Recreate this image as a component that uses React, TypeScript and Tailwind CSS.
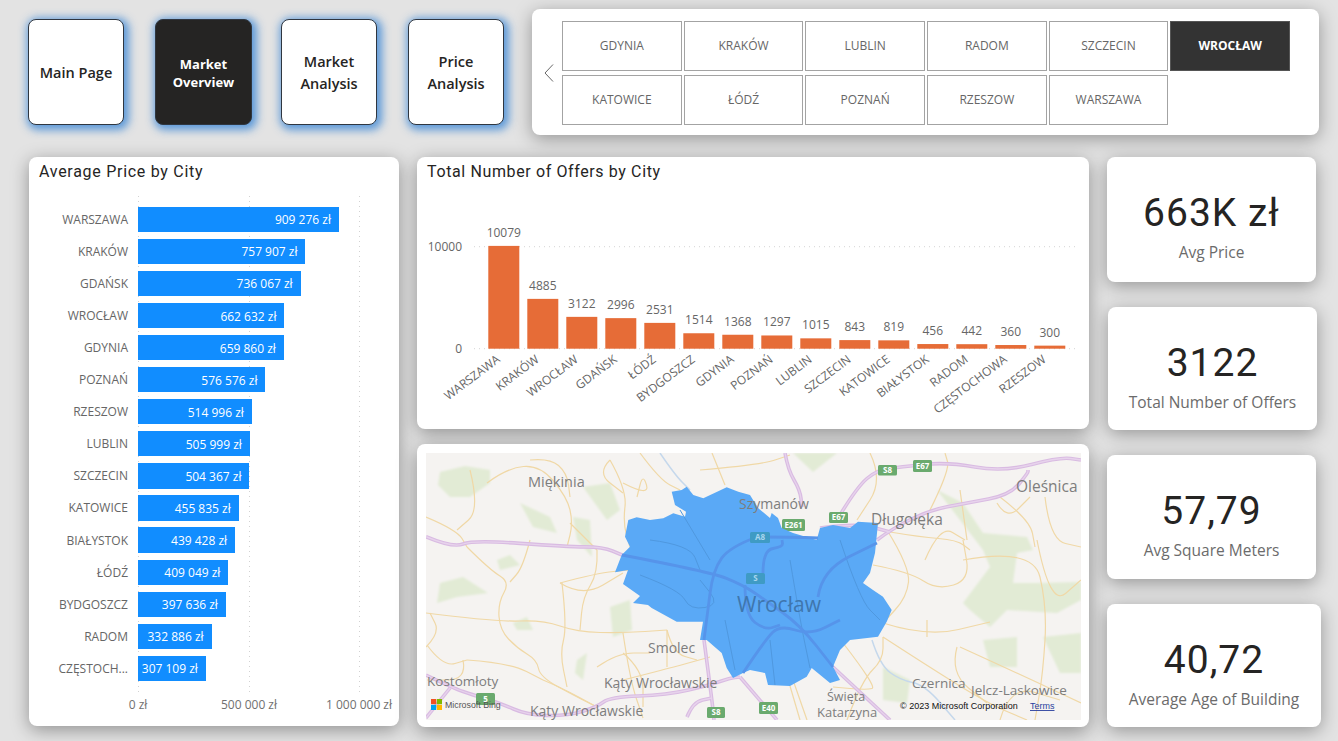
import React from "react";

const NAV = [
  { label: ["Main Page"], active: false, box: "w-[96px]" },
  { label: ["Market", "Overview"], active: true, box: "ml-[31px] w-[97px]" },
  { label: ["Market", "Analysis"], active: false, box: "ml-[29px] w-[96px]" },
  { label: ["Price", "Analysis"], active: false, box: "ml-[31px] w-[96px]" },
];

const SLICER = ["GDYNIA", "KRAKÓW", "LUBLIN", "RADOM", "SZCZECIN", "WROCŁAW", "KATOWICE", "ŁÓDŹ", "POZNAŃ", "RZESZOW", "WARSZAWA"];

const PRICES: [string, number, string][] = [
  ["WARSZAWA", 909276, "909 276 zł"],
  ["KRAKÓW", 757907, "757 907 zł"],
  ["GDAŃSK", 736067, "736 067 zł"],
  ["WROCŁAW", 662632, "662 632 zł"],
  ["GDYNIA", 659860, "659 860 zł"],
  ["POZNAŃ", 576576, "576 576 zł"],
  ["RZESZOW", 514996, "514 996 zł"],
  ["LUBLIN", 505999, "505 999 zł"],
  ["SZCZECIN", 504367, "504 367 zł"],
  ["KATOWICE", 455835, "455 835 zł"],
  ["BIAŁYSTOK", 439428, "439 428 zł"],
  ["ŁÓDŹ", 409049, "409 049 zł"],
  ["BYDGOSZCZ", 397636, "397 636 zł"],
  ["RADOM", 332886, "332 886 zł"],
  ["CZĘSTOCH...", 307109, "307 109 zł"],
];

const OFFERS: [string, number][] = [
  ["WARSZAWA", 10079],
  ["KRAKÓW", 4885],
  ["WROCŁAW", 3122],
  ["GDAŃSK", 2996],
  ["ŁÓDŹ", 2531],
  ["BYDGOSZCZ", 1514],
  ["GDYNIA", 1368],
  ["POZNAŃ", 1297],
  ["LUBLIN", 1015],
  ["SZCZECIN", 843],
  ["KATOWICE", 819],
  ["BIAŁYSTOK", 456],
  ["RADOM", 442],
  ["CZĘSTOCHOWA", 360],
  ["RZESZOW", 300],
];

const KPIS = [
  { value: "663K zł", label: "Avg Price", box: "h-[125px] w-[209px]" },
  { value: "3122", label: "Total Number of Offers", box: "mt-[25px] ml-[1px] h-[123px] w-[209px]" },
  { value: "57,79", label: "Avg Square Meters", box: "mt-[25px] h-[124px] w-[209px]" },
  { value: "40,72", label: "Average Age of Building", box: "mt-[25px] h-[123px] w-[214px]" },
];

const PX_PER_ZL = 221 / 1000000;

function NavButton({ label, active, box }: { label: string[]; active: boolean; box: string }) {
  return (
    <div
      className={`${box} flex h-[106px] shrink-0 flex-col items-center justify-center rounded-[8px] border border-[#2f3640] pt-[2px] text-center shadow-[2px_2px_8px_3px_rgba(58,134,214,0.8)] ${
        active
          ? "bg-[#252423] text-[13px] leading-[18px] font-bold text-white"
          : "bg-white text-[14.5px] leading-[22px] font-semibold text-[#252423]"
      }`}
    >
      {label.map((line) => (
        <span key={line}>{line}</span>
      ))}
    </div>
  );
}

function CitySlicer() {
  return (
    <div className="ml-[28px] flex h-[126px] w-[787px] shrink-0 items-center rounded-[8px] bg-white pt-[2px] pr-[29px] pl-[12px] shadow-[0_4px_18px_rgba(0,0,0,0.34)]">
      <svg width="10" height="18" viewBox="0 0 10 18" className="mr-[8px] shrink-0">
        <path d="M9 0.5 L1 9 L9 17.5" fill="none" stroke="#666" strokeWidth="1" />
      </svg>
      <div className="grid flex-1 grid-cols-6 grid-rows-[50px_50px] gap-x-[2px] gap-y-[4px]">
        {SLICER.map((city) => (
          <div
            key={city}
            className={`flex items-center justify-center border text-[12px] ${
              city === "WROCŁAW"
                ? "border-[#555] bg-[#333333] font-bold text-white"
                : "border-[#a3a3a3] font-medium text-[#666666]"
            }`}
          >
            {city}
          </div>
        ))}
      </div>
    </div>
  );
}

function PriceChart() {
  return (
    <div className="flex h-[569px] w-[370px] shrink-0 flex-col rounded-[8px] bg-white shadow-[0_4px_18px_rgba(0,0,0,0.36)]">
      <h2 className="mt-[6px] ml-[10px] font-['Roboto',sans-serif] text-[16px] leading-[18px] tracking-[0.72px] text-[#252423]">
        Average Price by City
      </h2>
      <div className="relative mt-[15px] flex flex-col gap-[6.9px] pt-[10.7px]">
        {[109, 220, 330].map((x) => (
          <div
            key={x}
            className="absolute top-0 h-[499px] w-px bg-[repeating-linear-gradient(to_bottom,#d2d2d2_0_1px,transparent_1px_5px)]"
            style={{ left: x }}
          />
        ))}
        {PRICES.map(([city, value, text]) => (
          <div key={city} className="relative flex h-[25.2px] items-center">
            <span className="w-[99px] pt-[1px] text-right text-[12px] text-[#666666]">{city}</span>
            <div
              className="ml-[10px] flex h-full items-center justify-end bg-[#118dff] pt-[2px] pr-[8px] text-[12px] font-medium whitespace-nowrap text-white"
              style={{ width: value * PX_PER_ZL }}
            >
              {text}
            </div>
          </div>
        ))}
        <div className="relative h-[16px] text-[12px] leading-[16px] text-[#707070]">
          <span className="absolute top-[9px] left-[109px] -translate-x-1/2 whitespace-nowrap">0 zł</span>
          <span className="absolute top-[9px] left-[220px] -translate-x-1/2 whitespace-nowrap">500 000 zł</span>
          <span className="absolute top-[9px] left-[330px] -translate-x-1/2 whitespace-nowrap">1 000 000 zł</span>
        </div>
      </div>
    </div>
  );
}

function OffersChart() {
  return (
    <div className="flex h-[272px] flex-col rounded-[8px] bg-white shadow-[0_4px_18px_rgba(0,0,0,0.36)]">
      <h2 className="mt-[6px] ml-[10px] h-[22px] font-['Roboto',sans-serif] text-[16px] leading-[18px] tracking-[0.62px] text-[#252423]">
        Total Number of Offers by City
      </h2>
      <svg width="672" height="244" viewBox="417 185 672 244" className="block">
        <line x1="474" y1="246.7" x2="1078" y2="246.7" stroke="#d4d4d4" strokeDasharray="1 4" />
        <line x1="474" y1="348.7" x2="1078" y2="348.7" stroke="#d4d4d4" strokeDasharray="1 4" />
        <text x="462" y="251" textAnchor="end" fontSize="12" fill="#666">10000</text>
        <text x="462" y="353" textAnchor="end" fontSize="12" fill="#666">0</text>
        {OFFERS.map(([city, n], i) => {
          const x = 488.3 + i * 39;
          const h = n * 0.0102;
          const cx = x + 15.5;
          return (
            <g key={city}>
              <rect x={x} y={348.7 - h} width="31" height={h} fill="#e66c37" />
              <text x={cx} y={348.7 - h - 9} textAnchor="middle" fontSize="12" fill="#666">{n}</text>
              <text
                x={cx - 3}
                y={361}
                textAnchor="end"
                fontSize="12"
                fill="#666"
                transform={`rotate(-37 ${cx - 3} 361)`}
              >
                {city}
              </text>
            </g>
          );
        })}
      </svg>
    </div>
  );
}

const GREEN = [
  "440,472 465,466 490,470 490,483 470,497 450,497 438,485",
  "520,503 550,517 557,533 533,527",
  "573,517 590,520 592,557 577,540",
  "497,560 510,555 520,565 500,570",
  "440,583 463,577 488,593 457,597 437,603",
  "513,623 527,617 533,630 517,630",
  "583,487 610,483 620,510 607,520",
  "577,660 587,653 583,680 575,673",
  "610,607 630,600 632,630 613,637",
  "937,490 963,503 983,533 1027,537 1033,550 1017,553 1013,583 1037,583 1081,582 1081,600 1057,613 1007,610 990,627 970,610 963,603 990,567 983,550",
  "983,640 1017,637 1017,667 990,667",
  "1043,637 1081,633 1081,673 1060,673",
  "793,453 837,453 813,472",
  "883,667 910,680 907,703 883,700",
];

const MINOR_ROADS = [
  "487,483 507,468 540,465 567,497 573,523 567,547",
  "467,547 490,570 510,582 498,603 500,630 517,648 537,660 540,677 577,697 597,707",
  "426,613 497,622 543,620 577,632 623,633 667,630",
  "560,583 597,573 630,570",
  "562,583 567,627 560,653 567,687",
  "597,550 598,573 583,597 580,630",
  "610,460 627,490 623,523 630,547",
  "530,460 550,458 567,473 570,497",
  "426,517 457,530 467,547",
  "623,680 663,670 710,657",
  "667,630 667,667",
  "623,633 630,680 643,718",
  "467,660 510,663 543,680",
  "427,645 443,667 467,660",
  "470,470 480,510 457,530",
  "887,530 910,567 907,597 883,623",
  "873,565 910,572 937,590 970,580 963,540",
  "883,623 927,637 990,622",
  "883,637 923,663 987,703 1027,720",
  "963,560 1033,547 1047,607 1043,673 1035,720",
  "1045,497 1050,540 1081,547",
  "960,647 1017,673 1081,703",
  "790,686 800,720",
  "847,720 862,680 883,660 883,637",
  "870,453 883,480 857,520",
  "930,510 950,470 945,453",
  "1000,497 1030,520 1035,547",
  "925,560 940,525 965,540",
  "700,470 760,465 790,455",
  "640,453 660,480 680,490",
  "712,453 725,485",
  "1000,720 1010,685 1060,700",
  "610,460 597,473 623,493",
  "623,483 650,497 643,473 637,497",
  "570,523 597,550",
  "530,540 523,567 510,582",
  "560,583 583,597 623,573",
  "426,647 440,633 430,613",
  "463,660 467,680 427,680",
  "543,680 560,687 597,707",
  "623,653 643,670 643,707",
  "597,667 617,653 650,653",
  "667,630 673,653 697,660",
  "890,532 920,537 957,540 970,550",
  "967,540 960,490",
  "997,503 1007,520 1030,497",
  "927,620 927,637",
  "957,647 950,673 987,703",
  "843,643 877,687 867,690 833,687",
  "793,680 807,720",
  "1037,540 1050,607 1081,580",
];

const HIGHWAYS = [
  "426,536.7 453,548 473,540 567,546.7 603,547 622,555",
  "426,675 453,688 473,695 500,703 527,715 567,716 597,707 610,697 667,695 710,685 730,678 740,677",
  "426,718 450,688",
  "687,717 693,702 712,698",
  "704,640 712,700 714,720",
  "740,677 777,720",
  "785,453 788,470 800,490 802,507",
  "840,515 857,487 877,470 900,467 947,462 1003,472 1060,457 1081,460",
  "877,540 893,528 930,510 967,503 1010,495 1028,473 1028,470",
  "820,528 857,523 890,532",
  "833,667 890,720",
];

const INNER_ROADS = [
  "622,555 710,571.7 743,585 765,600 800,625 833,667",
  "757,537 730,546.7 713,570 707,617 704,640",
  "750,537 793,537 818,538",
  "763,573 763,550 783,547 782,540",
  "818,597 822,570 877,543",
  "743,673 765,640 780,625 810,635 840,620",
  "745,585 745,615 765,630 780,625",
];

const INNER_THIN = [
  "640,575 680,590 690,610 720,605 700,580",
  "650,540 690,545 700,570",
  "790,560 800,620 810,668",
  "840,540 860,600 880,620",
  "725,620 735,670",
  "770,640 775,685",
  "680,510 710,560",
];

const CITY_OUTLINE =
  "615,572.3 621.7,555 630,546.7 625,536.7 628.3,520 636.7,517.3 650,520 663.3,518.3 673.3,513.3 685,516.7 686,511.7 675,505 671.7,491.7 681.7,490 686.7,486.7 693.3,495 703.3,498.3 726.7,487.3 738.3,491.7 750,495 758,508 770,518 771.7,513 778,518 781.7,528 793,533 816.7,540 820,528 833,525 850,528 858,521.7 878,523 875,553 870,573 863,583 873,590 883,596.7 891.7,610 886.7,621.7 878,636.7 850,640 840,650 833,666.7 840,680 830,683 811.7,668 806.7,676.7 790,686 768,685 765,673 750,670 743,673 733,678 726.7,668 721.7,653 706.7,640 700,640 703,621.7 676.7,621.7 651.7,608 648,605 633,603 640,596 623,584 628,570";

const SHIELDS: [number, number, number, number, string, string][] = [
  [878, 465, 19, 10.5, "S8", "#6aaa6e"],
  [913, 460, 19, 12, "E67", "#6aaa6e"],
  [782, 519, 23, 12, "E261", "#6aaa6e"],
  [829, 512, 19, 11, "E67", "#6aaa6e"],
  [759, 702, 19, 12, "E40", "#6aaa6e"],
  [707, 707, 18, 11, "S8", "#6aaa6e"],
  [476, 693, 19, 12, "5", "#6aaa6e"],
  [750, 532, 20, 11, "A8", "#3f9bc4"],
  [746, 573, 19, 11, "S", "#3f9bc4"],
];

const PLACES: [string, number, number, number][] = [
  ["Miękinia", 528, 487, 14.5],
  ["Szymanów", 739, 509, 14],
  ["Długołęka", 871, 525, 15.5],
  ["Oleśnica", 1016, 492, 15.5],
  ["Smolec", 648, 653, 14],
  ["Kostomłoty", 427, 686, 13.5],
  ["Kąty Wrocławskie", 604, 688, 14],
  ["Kąty Wrocławskie", 530, 716, 14],
  ["Święta", 827, 701, 12.5],
  ["Katarzyna", 817, 717, 13],
  ["Czernica", 912, 688, 13.5],
  ["Jelcz-Laskowice", 971, 695, 13.5],
];

// turns "x,y x,y ..." into a path rounded through the midpoints, roads look less angular
function smooth(points: string) {
  const pts = points.split(" ").map((p) => p.split(",").map(Number));
  let d = `M${pts[0][0]} ${pts[0][1]}`;
  for (let i = 1; i < pts.length - 1; i++) {
    const mx = (pts[i][0] + pts[i + 1][0]) / 2;
    const my = (pts[i][1] + pts[i + 1][1]) / 2;
    d += ` Q${pts[i][0]} ${pts[i][1]} ${mx} ${my}`;
  }
  const last = pts[pts.length - 1];
  return `${d} L${last[0]} ${last[1]}`;
}

function CityMap() {
  return (
    <div className="mt-[15px] h-[283px] rounded-[8px] bg-white px-[9px] pt-[9px] shadow-[0_5px_20px_rgba(0,0,0,0.38)]">
      <svg width="655" height="267" viewBox="426 453 655 267" className="block bg-[#f5f3f1]">
        <defs>
          <filter id="soft">
            <feGaussianBlur stdDeviation="1.2" />
          </filter>
        </defs>
        <g filter="url(#soft)">
          {GREEN.map((p) => (
            <polygon key={p} points={p} fill="#e2ebd5" />
          ))}
        </g>
        <path d={smooth("660,453 675,475 690,490")} fill="none" stroke="#c5d8ec" strokeWidth="1.5" />
        <path d={smooth("872,640 880,665 900,680 925,685 955,720")} fill="none" stroke="#c5d8ec" strokeWidth="1.5" />
        {MINOR_ROADS.map((p) => (
          <path key={p} d={smooth(p)} fill="none" stroke="#f0d8a6" strokeWidth="1.2" />
        ))}
        {HIGHWAYS.map((p) => (
          <path key={p} d={smooth(p)} fill="none" stroke="#d9bbe2" strokeWidth="3.6" />
        ))}
        {HIGHWAYS.map((p) => (
          <path key={`c${p}`} d={smooth(p)} fill="none" stroke="#e7d3ec" strokeWidth="1.3" />
        ))}
        {SHIELDS.slice(0, 7).map(([x, y, w, h, text, color]) => (
          <g key={`${text}${x}`}>
            <rect x={x} y={y} width={w} height={h} rx="1.5" fill={color} />
            <text x={x + w / 2} y={y + h - 3} textAnchor="middle" fontSize="8" fontWeight="700" fill="#fff">
              {text}
            </text>
          </g>
        ))}
        <polygon points={CITY_OUTLINE} fill="#5aa9f6" />
        {INNER_THIN.map((p) => (
          <path key={p} d={smooth(p)} fill="none" stroke="#4f98df" strokeWidth="1" />
        ))}
        {INNER_ROADS.map((p) => (
          <path key={p} d={smooth(p)} fill="none" stroke="#5694ea" strokeWidth="2.8" />
        ))}
        {SHIELDS.slice(7).map(([x, y, w, h, text, color]) => (
          <g key={`b${text}`}>
            <rect x={x} y={y} width={w} height={h} rx="1.5" fill={color} />
            <text x={x + w / 2} y={y + h - 3} textAnchor="middle" fontSize="8" fontWeight="700" fill="#a9d6ee">
              {text}
            </text>
          </g>
        ))}
        {PLACES.map(([name, x, y, size]) => (
          <text key={`${name}${x}`} x={x} y={y} fontSize={size} fill="#7d7d7d">
            {name}
          </text>
        ))}
        <text x="737" y="612" fontSize="21" fill="#3f76ad">Wrocław</text>
        <rect x="431" y="699" width="5.2" height="5.2" fill="#f25022" />
        <rect x="436.8" y="699" width="5.2" height="5.2" fill="#7fba00" />
        <rect x="431" y="704.8" width="5.2" height="5.2" fill="#00a4ef" />
        <rect x="436.8" y="704.8" width="5.2" height="5.2" fill="#ffb900" />
        <text x="445" y="708" fontSize="8.8" fill="#555" fontFamily="'Liberation Sans',sans-serif">Microsoft Bing</text>
        <text x="900" y="709" fontSize="9" fill="#111" fontFamily="'Liberation Sans',sans-serif">© 2023 Microsoft Corporation</text>
        <text x="1030" y="709" fontSize="9" fill="#2a3f9e" textDecoration="underline" fontFamily="'Liberation Sans',sans-serif">Terms</text>
      </svg>
    </div>
  );
}

function KpiCard({ value, label, box }: { value: string; label: string; box: string }) {
  return (
    <div className={`${box} flex flex-col items-center rounded-[8px] bg-white pt-[31px] shadow-[0_4px_18px_rgba(0,0,0,0.34)]`}>
      <span className="font-['Roboto',sans-serif] text-[39px] leading-[50px] font-normal tracking-[1px] text-[#252423]">
        {value}
      </span>
      <span className="mt-[3px] text-[15.5px] leading-[22px] text-[#6b6b6b]">{label}</span>
    </div>
  );
}

export default function App() {
  return (
    <div className="h-[741px] w-[1338px] overflow-hidden bg-[#e3e3e3] pt-[9px] font-['Open_Sans','Noto_Sans',sans-serif]">
      <header className="flex items-center pl-[28px]">
        {NAV.map((item) => (
          <NavButton key={item.label.join(" ")} {...item} />
        ))}
        <CitySlicer />
      </header>
      <main className="mt-[22px] flex items-start pl-[29px]">
        <PriceChart />
        <div className="ml-[18px] w-[672px] shrink-0">
          <OffersChart />
          <CityMap />
        </div>
        <div className="ml-[18px] flex flex-col items-start">
          {KPIS.map((kpi) => (
            <KpiCard key={kpi.label} {...kpi} />
          ))}
        </div>
      </main>
    </div>
  );
}
